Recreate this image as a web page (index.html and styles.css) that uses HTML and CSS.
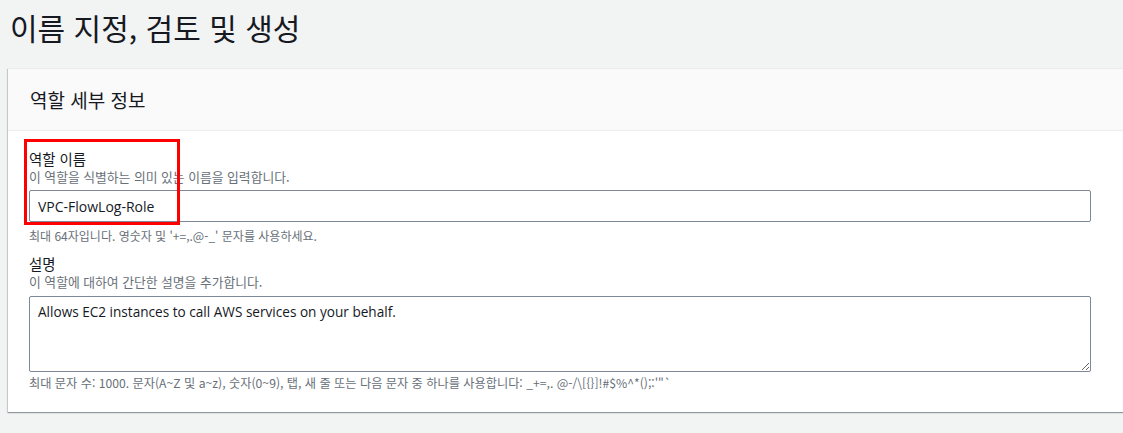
FILE: index.html
```html
<!DOCTYPE html>
<html lang="ko">
<head>
<meta charset="utf-8">
<link rel="stylesheet" href="styles.css">
</head>
<body>
<h1 class="page-title">이름 지정, 검토 및 생성</h1>
<section class="card">
  <div class="card-header">역할 세부 정보</div>
  <div class="card-body">
    <div class="field">
      <label class="label">역할 이름</label>
      <div class="desc">이 역할을 식별하는 의미 있는 이름을 입력합니다.</div>
      <input class="input" type="text" value="VPC-FlowLog-Role" readonly>
      <div class="hint">최대 64자입니다. 영숫자 및 '+=,.@-_' 문자를 사용하세요.</div>
    </div>
    <div class="field field-2">
      <label class="label">설명</label>
      <div class="desc">이 역할에 대하여 간단한 설명을 추가합니다.</div>
      <textarea class="textarea" readonly>Allows EC2 instances to call AWS services on your behalf.</textarea>
      <div class="hint hint-2">최대 문자 수: 1000. 문자(A~Z 및 a~z), 숫자(0~9), 탭, 새 줄 또는 다음 문자 중 하나를 사용합니다: _+=,. @-/\[{}]!#$%^*();:'"`</div>
    </div>
  </div>
  <div class="highlight"></div>
</section>
</body>
</html>
```
FILE: styles.css
```css
html, body {
  margin: 0;
  padding: 0;
  background: #f2f3f3;
  overflow: hidden;
}
body {
  width: 1123px;
  height: 433px;
  font-family: "Open Sans", "Noto Sans CJK KR", sans-serif;
  color: #16191f;
}
.page-title {
  margin: 0;
  padding: 8px 0 0 10px;
  height: 59px;
  box-sizing: border-box;
  font-size: 30px;
  line-height: 38px;
  font-weight: 400;
  color: #16191f;
  font-family: "Noto Sans CJK KR", sans-serif;
}
.card {
  position: relative;
  margin: 9px 0 0 8px;
  width: 1140px;
  background: #fff;
  border-top: 1px solid #eaeded;
  box-shadow: 0 1px 1px 0 rgba(0, 28, 36, 0.3), -1px 1px 1px 0 rgba(0, 28, 36, 0.15);
}
.card-header {
  height: 62px;
  box-sizing: border-box;
  background: #fafafa;
  border-bottom: 1px solid #eaeded;
  padding: 0 0 0 22px;
  display: flex;
  align-items: center;
  font-size: 19px;
  font-family: "Noto Sans CJK KR", sans-serif;
  color: #16191f;
}
.card-body {
  padding: 18px 0 21px 21px;
}
.field {
  display: flex;
  flex-direction: column;
  width: 1062px;
}
.field-2 {
  margin-top: 10px;
}
.label {
  font-size: 14.4px;
  line-height: 20px;
  color: #16191f;
  font-family: "Noto Sans CJK KR", sans-serif;
}
.desc, .hint {
  font-size: 12px;
  line-height: 16px;
  color: #687078;
  font-family: "Noto Sans CJK KR", sans-serif;
}
.desc {
  font-size: 12.8px;
}
.input {
  margin-top: 5px;
  height: 32px;
  box-sizing: border-box;
  border: 1px solid #7d8998;
  border-radius: 2px;
  padding: 0 8px;
  font-family: "Open Sans", sans-serif;
  font-size: 14px;
  color: #16191f;
  background: #fff;
  outline: none;
}
.hint {
  margin-top: 6px;
}
.textarea {
  margin-top: 6px;
  height: 76px;
  box-sizing: border-box;
  border: 1px solid #7d8998;
  border-radius: 2px;
  padding: 5px 8px;
  font-family: "Open Sans", sans-serif;
  font-size: 13.6px;
  line-height: 20px;
  color: #16191f;
  resize: vertical;
  outline: none;
}
.hint-2 {
  margin-top: 3px;
  font-size: 12.2px;
}
.highlight {
  position: absolute;
  left: 16px;
  top: 70px;
  width: 156px;
  height: 86px;
  box-sizing: border-box;
  border: 3px solid #ff0000;
  pointer-events: none;
}
```
